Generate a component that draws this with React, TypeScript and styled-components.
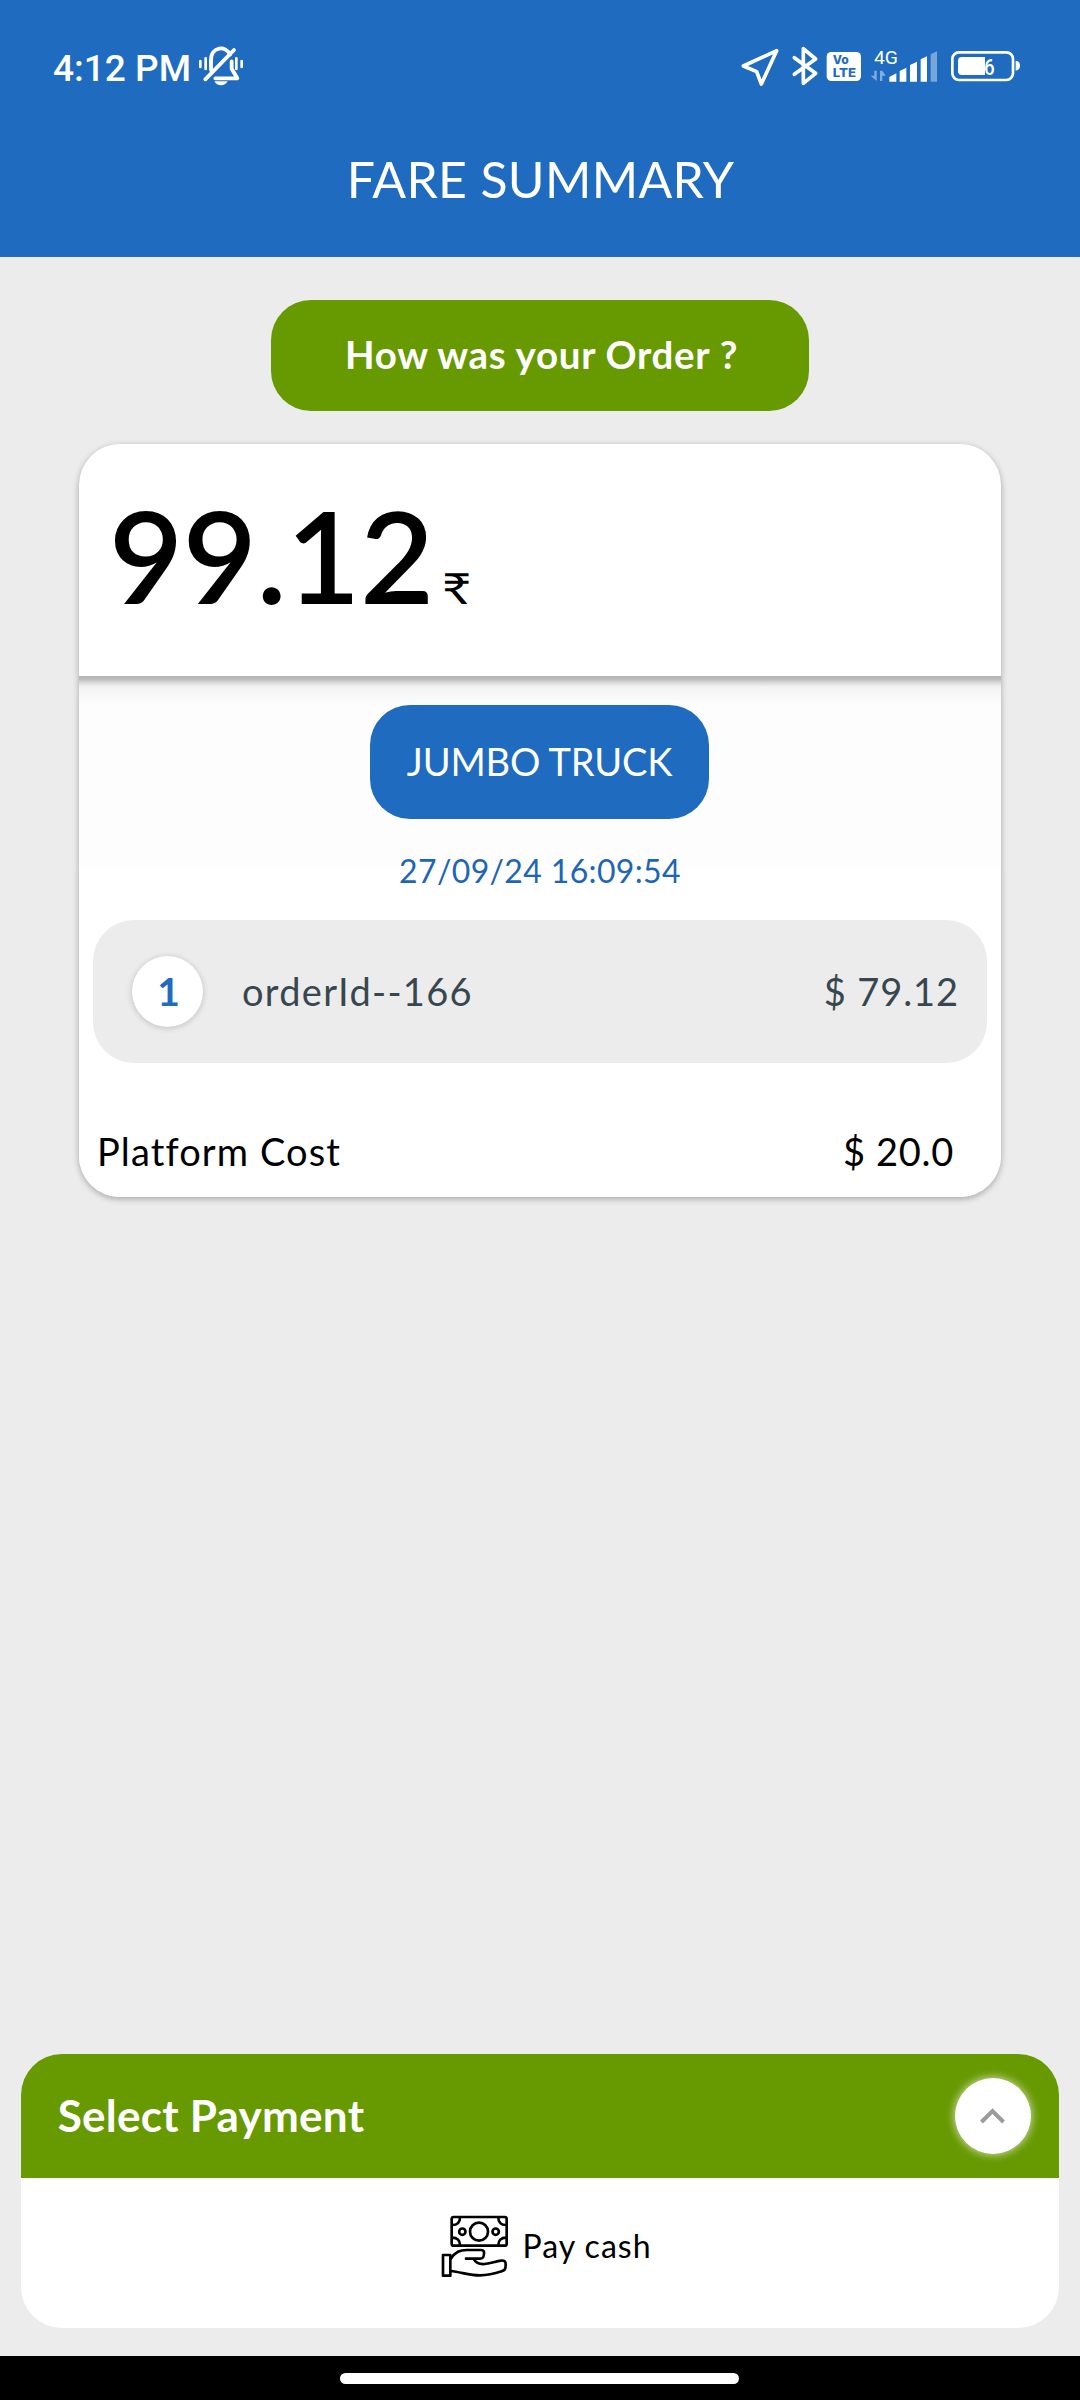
import React from "react";
import styled, { createGlobalStyle } from "styled-components";

const BLUE = "#1e6bc0";
const GREEN = "#679900";
const GREY = "#ececec";

const GlobalStyle = createGlobalStyle`
  *, *::before, *::after { box-sizing: border-box; }
  body { margin: 0; background: ${GREY}; }
`;

const Screen = styled.div`
  display: flex;
  flex-direction: column;
  width: 1080px;
  height: 2400px;
  background: ${GREY};
  color: #000;
  font-family: Lato, "Noto Sans", sans-serif;
  overflow: hidden;
`;

const Header = styled.header`
  height: 257px;
  background: ${BLUE};
  color: #fff;
`;

const StatusBar = styled.div`
  display: flex;
  justify-content: space-between;
  height: 149px;
  padding: 38px 58px 55px 53px;
`;

const StatusGroup = styled.div`
  display: flex;
  align-items: center;
  height: 56px;
`;

const Clock = styled.span`
  padding-top: 5px;
  margin-right: 6px;
  font: 500 37px/48px Roboto, sans-serif;
  white-space: nowrap;
`;

const StatusIcon = styled.svg<{ $w: number; $gap?: number }>`
  display: block;
  flex: none;
  width: ${(p) => p.$w}px;
  height: 56px;
  margin-right: ${(p) => p.$gap ?? 0}px;
  fill: none;
  stroke: #fff;
  stroke-linecap: round;
  stroke-linejoin: round;
`;

const Title = styled.h1`
  margin: 0;
  padding-left: 1px;
  font-weight: 400;
  font-size: 50px;
  line-height: 60px;
  letter-spacing: 0.31px;
  text-align: center;
`;

const Main = styled.main`
  display: flex;
  flex-direction: column;
  align-items: center;
  flex: 1;
  padding-top: 43px;
`;

const ReviewButton = styled.button`
  width: 538px;
  height: 111px;
  padding: 0 0 3px 3px;
  border: 0;
  border-radius: 40px;
  background: ${GREEN};
  color: #fff;
  font: 700 38.5px/48px Lato, sans-serif;
  letter-spacing: 0.7px;
`;

const Card = styled.section`
  width: 922px;
  height: 753px;
  margin-top: 33px;
  border-radius: 41px;
  background: #fff;
  box-shadow: 0 2px 6px rgba(0, 0, 0, 0.3);
  overflow: hidden;
`;

const Total = styled.div`
  display: flex;
  align-items: baseline;
  height: 232px;
  padding: 47px 0 0 30px;
`;

const Amount = styled.span`
  width: 324px;
  font-weight: 600;
  font-size: 128px;
  line-height: 128px;
  letter-spacing: -0.5px;
`;

const Currency = styled.span`
  margin-left: 8.5px;
  font-size: 43px;
  line-height: 50px;
  transform: scaleX(1.17);
  transform-origin: left;
`;

const Details = styled.div`
  display: flex;
  flex-direction: column;
  align-items: center;
  height: 521px;
  padding-top: 29px;
  background: linear-gradient(
    #b4b4b4 0,
    #bababa 3px,
    #dcdcdc 7px,
    #f3f3f3 11px,
    #f7f7f7 17px,
    #fdfdfd 30px,
    #fdfdfd 188px,
    #fff 200px
  );
`;

const Vehicle = styled.div`
  display: flex;
  align-items: center;
  justify-content: center;
  width: 339px;
  height: 114px;
  margin-right: 1px;
  padding-bottom: 2px;
  border-radius: 40px;
  background: ${BLUE};
  color: #fff;
  font-size: 38px;
  letter-spacing: -0.19px;
`;

const OrderDate = styled.time`
  margin-top: 32px;
  color: #1e66b3;
  font-size: 32px;
  line-height: 40px;
  letter-spacing: 0.35px;
`;

const OrderRow = styled.div`
  display: flex;
  align-items: center;
  width: 894px;
  height: 143px;
  margin-top: 29px;
  padding: 0 28px 0 39px;
  border-radius: 41px;
  background: ${GREY};
  color: #37474f;
`;

const Index = styled.span`
  display: flex;
  align-items: center;
  justify-content: center;
  width: 71px;
  height: 71px;
  margin-right: 39px;
  padding: 0 0 2px 2px;
  border-radius: 50%;
  background: #fff;
  box-shadow: 0 1px 6px rgba(0, 0, 0, 0.2);
  color: ${BLUE};
  font-weight: 700;
  font-size: 39px;
`;

const Label = styled.span<{ $spacing: number }>`
  flex: 1;
  font-size: 38px;
  line-height: 48px;
  letter-spacing: ${(p) => p.$spacing}px;
`;

const Price = styled.span<{ $spacing: number }>`
  font-size: 38px;
  line-height: 48px;
  letter-spacing: ${(p) => p.$spacing}px;
`;

const OrderText = styled.div`
  display: flex;
  flex: 1;
  padding-bottom: 1px;
`;

const CostRow = styled.div`
  display: flex;
  align-self: stretch;
  margin-top: 64px;
  padding: 0 47px 0 18px;
`;

const Payment = styled.section`
  width: 1038px;
  margin: auto 0 28px;
  border-radius: 41px;
  background: #fff;
  overflow: hidden;
`;

const PaymentHeader = styled.div`
  display: flex;
  align-items: center;
  justify-content: space-between;
  height: 124px;
  padding: 0 28px 0 36.7px;
  background: ${GREEN};
  color: #fff;
`;

const PaymentTitle = styled.h2`
  margin: 0;
  padding-bottom: 3px;
  font-weight: 700;
  font-size: 44px;
  line-height: 52px;
  letter-spacing: 0.26px;
`;

const Toggle = styled.button`
  display: flex;
  align-items: center;
  justify-content: center;
  width: 76px;
  height: 76px;
  padding: 0;
  border: 0;
  border-radius: 50%;
  background: #fff;
  box-shadow: 0 0 8px 1px rgba(255, 255, 255, 0.65);
`;

const PaymentOption = styled.div`
  display: flex;
  align-items: center;
  justify-content: center;
  gap: 12px;
  height: 150px;
  padding: 0 0 14px 12px;
`;

const OptionText = styled.span`
  padding-bottom: 1px;
  font-size: 32px;
  line-height: 40px;
  letter-spacing: 1.01px;
`;

const NavBar = styled.nav`
  display: flex;
  align-items: center;
  justify-content: center;
  height: 44px;
  padding-right: 1px;
  background: #000;
`;

const NavHandle = styled.div`
  width: 399px;
  height: 11px;
  border-radius: 6px;
  background: #fff;
`;

const MutedBell = () => (
  <StatusIcon $w={48} viewBox="501 24 144 168" strokeWidth="9">
    <path d="M543 120V90c0-42 46-44 57-16M605 94v22l17 29h-66M526 148 612 60" strokeWidth="11.5" />
    <path d="M511 93v18M527 85v32M619 85v32M635 93v18" strokeWidth="8" />
    <path d="M553 154h40c-8 16-32 16-40 0z" fill="#fff" stroke="none" />
  </StatusIcon>
);

const LocationArrow = () => (
  <StatusIcon $w={42} $gap={10} viewBox="55 24 126 168" strokeWidth="11">
    <path d="M168 62 68 108l40 17 14 37z" />
  </StatusIcon>
);

const Bluetooth = () => (
  <StatusIcon $w={28} $gap={7} viewBox="210 24 84 168" strokeWidth="11">
    <path d="M220 83l64 47-37 30V56l37 31-64 46" />
  </StatusIcon>
);

const Volte = () => (
  <StatusIcon $w={36} $gap={8} viewBox="318 24 108 168">
    <rect x="320" y="66" width="103" height="87" rx="14" fill="#fff" stroke="none" />
    <g fill={BLUE} stroke="none" fontFamily="Inter, sans-serif" fontWeight="800" fontSize="35">
      <text x="338" y="103" textLength="48" lengthAdjust="spacingAndGlyphs">Vo</text>
      <text x="338" y="142" textLength="70" lengthAdjust="spacingAndGlyphs">LTE</text>
    </g>
  </StatusIcon>
);

const Signal = () => (
  <StatusIcon $w={68} $gap={12} viewBox="450 24 204 168">
    <text x="462" y="101" fill="#fff" stroke="none" fontFamily="Roboto, sans-serif" fontSize="56" textLength="72" lengthAdjust="spacingAndGlyphs">4G</text>
    <g fill="#fff" stroke="none">
      <path d="M508 155v-14l21-11v25zM539 155v-32l20-10v42zM570 155v-50l21-10v60zM602 155V88l19-9v76z" />
      <path d="M632 155V73l19-9v91z" opacity=".4" />
      <path d="M463 122h7v31l-18-16h11zM480 153v-31h7v15h11l-11 0v16z M487 122l10 15h-10z" opacity=".45" />
    </g>
  </StatusIcon>
);

const Battery = () => (
  <StatusIcon $w={72} viewBox="690 24 216 168">
    <rect x="697" y="67" width="182" height="83" rx="20" strokeWidth="8" />
    <path d="M795 81h-70q-11 0-11 11v32q0 11 11 11h70z" fill="#fff" stroke="none" />
    <path d="M887 92q13 2 13 15t-13 15z" fill="#fff" stroke="none" />
    <text x="792" y="135" fill="#fff" stroke="none" fontFamily="Roboto, sans-serif" fontWeight="500" fontSize="68" textLength="32" lengthAdjust="spacingAndGlyphs">6</text>
  </StatusIcon>
);

const CashInHand = () => (
  <svg width="70" height="65" viewBox="60 70 210 195" fill="none" stroke="#000" strokeWidth="8" strokeLinejoin="round" strokeLinecap="round">
    <rect x="95" y="79" width="165" height="86" rx="6" />
    <circle cx="177" cy="123" r="27" />
    <circle cx="127" cy="123" r="9.5" />
    <circle cx="227" cy="123" r="9.5" />
    <path d="M120 81c0 13-8 22-23 22M235 81c0 13 8 22 23 22M120 163c0-13-8-22-23-22M235 163c0-13 8-22 23-22" />
    <path d="M69 193h22v62H69z" />
    <path d="M92 205c14-22 28-27 48-27h43c8 0 10 4 9 12-1 11-4 14-12 14h-42M162 206c6 12 18 15 32 14 20-2 34-8 48-10 11-2 16 3 15 13 0 12-2 15-12 19-24 8-42 12-65 12-30 0-55-9-88-13" />
  </svg>
);

const ChevronUp = () => (
  <svg width="26" height="16" viewBox="0 0 26 16" fill="none" stroke="#9b9b9b" strokeWidth="4">
    <path d="M1.5 14 12.5 3l11 11" />
  </svg>
);

export default function App() {
  return (
    <Screen>
      <GlobalStyle />
      <Header>
        <StatusBar>
          <StatusGroup>
            <Clock>4:12 PM</Clock>
            <MutedBell />
          </StatusGroup>
          <StatusGroup>
            <LocationArrow />
            <Bluetooth />
            <Volte />
            <Signal />
            <Battery />
          </StatusGroup>
        </StatusBar>
        <Title>FARE SUMMARY</Title>
      </Header>
      <Main>
        <ReviewButton>How was your Order ?</ReviewButton>
        <Card>
          <Total>
            <Amount>99.12</Amount>
            <Currency>₹</Currency>
          </Total>
          <Details>
            <Vehicle>JUMBO TRUCK</Vehicle>
            <OrderDate>27/09/24 16:09:54</OrderDate>
            <OrderRow>
              <Index>1</Index>
              <OrderText>
                <Label $spacing={1.31}>orderId--166</Label>
                <Price $spacing={0.9}>$ 79.12</Price>
              </OrderText>
            </OrderRow>
            <CostRow>
              <Label $spacing={1.11}>Platform Cost</Label>
              <Price $spacing={0.7}>$ 20.0</Price>
            </CostRow>
          </Details>
        </Card>
        <Payment>
          <PaymentHeader>
            <PaymentTitle>Select Payment</PaymentTitle>
            <Toggle aria-label="Collapse">
              <ChevronUp />
            </Toggle>
          </PaymentHeader>
          <PaymentOption>
            <CashInHand />
            <OptionText>Pay cash</OptionText>
          </PaymentOption>
        </Payment>
      </Main>
      <NavBar>
        <NavHandle />
      </NavBar>
    </Screen>
  );
}
